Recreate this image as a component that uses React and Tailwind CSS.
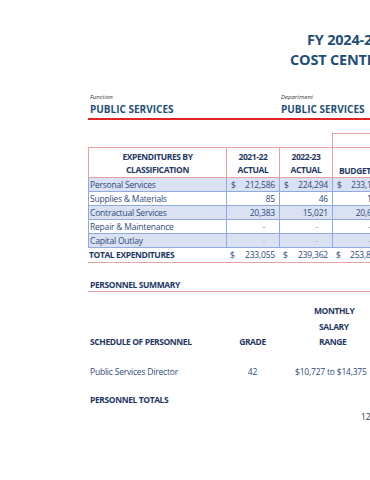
import React from 'react'

const rows = [
  { name: 'Personal Services', a: '212,586', b: '224,294', c: '233,149', dollar: true, shade: true },
  { name: 'Supplies & Materials', a: '85', b: '46', c: '150', shade: false },
  { name: 'Contractual Services', a: '20,383', b: '15,021', c: '20,650', shade: true },
  { name: 'Repair & Maintenance', a: '-', b: '-', c: '-', shade: false, dash: true },
  { name: 'Capital Outlay', a: '-', b: '-', c: '-', shade: true, dash: true, faint: true },
]

// Amount cell: optional "$" on the left, figure on the right
function Amount({ value, dollar, dash, faint, last }) {
  return (
    <div className={`flex items-center justify-between px-[4px] h-full ${last ? '' : 'border-r border-[#8faadc]'}`}>
      <span>{dollar ? '$' : ''}</span>
      <span className={dash ? `pr-[10px] ${faint ? 'text-[#a9b6d3]' : 'text-[#6f7fa3]'}` : ''}>{value}</span>
    </div>
  )
}

export default function App() {
  return (
    <div className="w-[370px] h-[480px] overflow-hidden bg-white" style={{ fontFamily: '"Open Sans", Lato, sans-serif' }}>
      <div className="w-[560px]">

        {/* Title */}
        <div className="pt-[30px] flex flex-col font-bold text-[14.5px] tracking-[-0.2px] leading-[20px] text-[#1f4e79] whitespace-nowrap">
          <span className="ml-[307px]">FY 2024-25</span>
          <span className="ml-[290px]">COST CENTER</span>
        </div>

        {/* Function / Department */}
        <div className="ml-[88px] mt-[23px] border-b-2 border-[#e02424] flex">
          <div className="w-[193px] pl-[2px]">
            <div className="italic text-[6px] leading-[8px] text-[#333]">Function</div>
            <div className="font-bold text-[10px] leading-[17px] text-[#1f4e79]">PUBLIC SERVICES</div>
          </div>
          <div>
            <div className="italic text-[6px] leading-[8px] text-[#333]">Department</div>
            <div className="font-bold text-[10px] leading-[17px] text-[#1f4e79]">PUBLIC SERVICES</div>
          </div>
        </div>

        {/* Expenditures table */}
        <div className="ml-[88px] mt-[13px] text-[8.5px] tracking-[-0.2px] text-[#2f4a80]">
          <div className="flex h-[14px]">
            <div className="w-[244px]" />
            <div className="w-[120px] border-t border-l border-[#e8a0a0]" />
          </div>
          <div className="grid grid-cols-[138px_53px_53px_52px] border border-[#e8a0a0] h-[31px] font-bold tracking-[-0.4px] text-[#1f3864] leading-[13px] text-center">
            <div className="flex flex-col justify-center border-r border-[#e8a0a0]">
              <span>EXPENDITURES BY</span>
              <span>CLASSIFICATION</span>
            </div>
            <div className="flex flex-col justify-center border-r border-[#e8a0a0]">
              <span>2021-22</span>
              <span>ACTUAL</span>
            </div>
            <div className="flex flex-col justify-center border-r border-[#e8a0a0]">
              <span>2022-23</span>
              <span>ACTUAL</span>
            </div>
            <div className="flex flex-col justify-end text-left pl-[6px]">
              <span>BUDGET</span>
            </div>
          </div>
          {rows.map((r) => (
            <div key={r.name} className={`grid grid-cols-[138px_53px_53px_52px] h-[14px] leading-[13px] border-l border-b border-[#8faadc] ${r.shade ? 'bg-[#d9e1f2]' : 'bg-white'}`}>
              <div className="pl-[1px] border-r border-[#8faadc]">{r.name}</div>
              <Amount value={r.a} dollar={r.dollar} dash={r.dash} faint={r.faint} />
              <Amount value={r.b} dollar={r.dollar} dash={r.dash} faint={r.faint} />
              <Amount value={r.c} dollar={r.dollar} dash={r.dash} faint={r.faint} last />
            </div>
          ))}
          <div className="grid grid-cols-[138px_53px_53px_52px] h-[15px] leading-[14px] border-b border-[#e8a0a0]">
            <div className="pl-[1px] font-bold tracking-[-0.4px] text-[#1f3864]">TOTAL EXPENDITURES</div>
            <div className="flex justify-between px-[4px]"><span>$</span><span>233,055</span></div>
            <div className="flex justify-between px-[4px]"><span>$</span><span>239,362</span></div>
            <div className="flex justify-between px-[4px]"><span>$</span><span>253,849</span></div>
          </div>
        </div>

        {/* Personnel summary */}
        <div className="ml-[88px] mt-[15px] border-b border-[#e8a0a0] pl-[2px] font-bold text-[8.5px] tracking-[-0.4px] leading-[13px] text-[#1f3864]">
          PERSONNEL SUMMARY
        </div>

        <div className="ml-[88px] mt-[11px] grid grid-cols-[138px_53px_110px] text-[8.5px] tracking-[-0.4px] leading-[15.5px] font-bold text-[#1f3864]">
          <div className="pl-[2px] self-end">SCHEDULE OF PERSONNEL</div>
          <div className="text-center self-end">GRADE</div>
          <div className="flex flex-col text-left pl-[28px]">
            <span className="pl-[7px]">MONTHLY</span>
            <span className="pl-[12px]">SALARY</span>
            <span className="pl-[12px]">RANGE</span>
          </div>
        </div>

        <div className="ml-[88px] mt-[15px] grid grid-cols-[138px_53px_110px] text-[8.5px] tracking-[-0.2px] leading-[13px] text-[#2f4a80]">
          <div className="pl-[2px]">Public Services Director</div>
          <div className="text-center">42</div>
          <div className="pl-[16px]">$10,727 to $14,375</div>
        </div>

        <div className="ml-[88px] mt-[15px] pl-[2px] font-bold text-[8.5px] tracking-[-0.4px] leading-[13px] text-[#1f3864]">
          PERSONNEL TOTALS
        </div>
        <div className="ml-[361px] mt-[4px] text-[8.5px] leading-[13px] text-[#333]">12</div>
      </div>
    </div>
  )
}
